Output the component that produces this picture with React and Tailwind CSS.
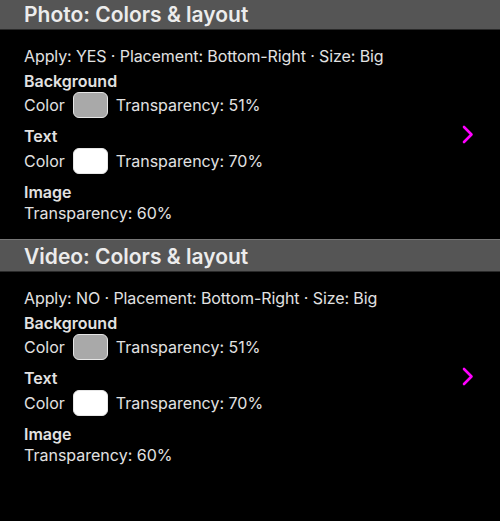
import React from "react";

const sections = [
  { title: "Photo: Colors & layout", apply: "YES" },
  { title: "Video: Colors & layout", apply: "NO" },
];

const Chevron = () => (
  <svg width="12" height="19" viewBox="0 0 12 19" fill="none">
    <polyline
      points="2,2 9.5,9.5 2,17"
      stroke="#ff00ff"
      strokeWidth="2.6"
      strokeLinecap="round"
      strokeLinejoin="round"
    />
  </svg>
);

const Swatch = ({ fill }) => (
  <div className={`w-[35px] h-[26px] rounded-[6px] border border-[#e6e6e6] ${fill}`} />
);

const Section = ({ title, apply }) => (
  <div>
    <div className="h-[33px] bg-[#555555] border-t border-[#767676] border-b border-b-[#2a2a2a] pl-6 flex items-center">
      <h2 className="text-[21px] font-semibold text-[#ececec] leading-none pt-[2px]">{title}</h2>
    </div>
    <div className="flex items-center pl-6 pr-[26px] pt-4 pb-4">
      <div className="flex-1 text-[16px] leading-[20px] text-[#e2e2e2]">
        <p className="tracking-[-0.1px]">Apply: {apply} · Placement: Bottom-Right · Size: Big</p>
        <p className="mt-[5px] font-semibold">Background</p>
        <div className="mt-[1px] flex items-center gap-[8px] h-[26px]">
          <span>Color</span>
          <Swatch fill="bg-[#a9a9a9]" />
          <span>Transparency: 51%</span>
        </div>
        <p className="mt-[8px] font-semibold">Text</p>
        <div className="mt-[2px] flex items-center gap-[8px] h-[26px]">
          <span>Color</span>
          <Swatch fill="bg-white" />
          <span>Transparency: 70%</span>
        </div>
        <p className="mt-[8px] font-semibold">Image</p>
        <p className="mt-[1px]">Transparency: 60%</p>
      </div>
      <Chevron />
    </div>
  </div>
);

export default function App() {
  return (
    <div
      className="w-[500px] h-[521px] bg-black overflow-hidden"
      style={{ fontFamily: "Inter, 'Noto Sans', sans-serif" }}
    >
      <div className="-mt-[3px]">
        {sections.map((s) => (
          <Section key={s.title} {...s} />
        ))}
      </div>
    </div>
  );
}
